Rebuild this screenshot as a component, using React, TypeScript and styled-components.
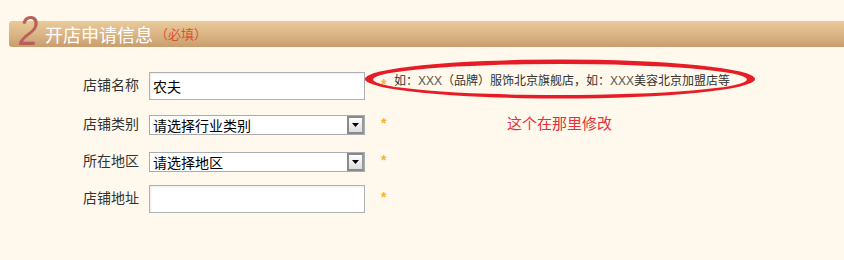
import React from "react";
import styled, { createGlobalStyle } from "styled-components";

const Global = createGlobalStyle`
  html, body {
    margin: 0;
    padding: 0;
    background: #fef9ec;
  }
  body {
    font-family: "Noto Sans CJK SC", "Noto Sans", sans-serif;
    color: #333;
  }
`;

const Page = styled.div`
  position: relative;
  width: 844px;
  height: 260px;
  padding-top: 21px;
  box-sizing: border-box;
  overflow: hidden;
`;

const Header = styled.div`
  margin-left: 9px;
  height: 26px;
  display: flex;
  align-items: flex-start;
  padding-left: 10px;
  border-radius: 3px 0 0 3px;
  background: linear-gradient(to bottom, #e9ca9b 0%, #dcb585 50%, #c89d6f 100%);
`;

const StepNumber = styled.span`
  display: inline-block;
  font-family: "Liberation Sans", Arial, sans-serif;
  font-style: italic;
  font-size: 43px;
  line-height: 26px;
  margin-top: -4px;
  color: #b6615a;
  width: 26px;
  transform: scaleX(0.8);
  transform-origin: left center;
`;

const Title = styled.span`
  font-size: 18px;
  line-height: 26px;
  color: #fff;
`;

const Required = styled.span`
  font-size: 13px;
  line-height: 26px;
  color: #d8532c;
  margin-left: 2px;
`;

const Form = styled.div`
  display: flex;
  flex-direction: column;
  padding-left: 83px;
`;

const Row = styled.div<{ $top: number; $height: number }>`
  display: flex;
  align-items: center;
  height: ${(p) => p.$height}px;
  margin-top: ${(p) => p.$top}px;
`;

const Label = styled.span`
  width: 66px;
  font-size: 14px;
  line-height: 20px;
  padding-bottom: 4px;
  color: #333;
`;

const TextInput = styled.div`
  width: 216px;
  height: 28px;
  box-sizing: border-box;
  border: 1px solid #aeb0b6;
  background: #fff;
  box-shadow: inset 1px 1px 2px rgba(0, 0, 0, 0.08);
  font-size: 14px;
  line-height: 26px;
  padding-left: 3px;
  color: #000;
`;

const Select = styled.div`
  width: 216px;
  height: 20px;
  box-sizing: border-box;
  border: 1px solid #a9abb0;
  background: #fff;
  display: flex;
  align-items: center;
  justify-content: space-between;
  font-size: 14px;
  color: #000;
  padding-left: 3px;
`;

const SelectText = styled.span`
  line-height: 18px;
`;

const ArrowButton = styled.span`
  width: 17px;
  height: 18px;
  box-sizing: border-box;
  border: 2px solid #8a8a8a;
  border-right-color: #9a9a9a;
  background: linear-gradient(to bottom, #ffffff, #dcdcdc);
  display: flex;
  align-items: center;
  justify-content: center;
`;

const Star = styled.span`
  margin-left: 16px;
  font-family: "Liberation Sans", Arial, sans-serif;
  font-size: 14px;
  font-weight: bold;
  line-height: 14px;
  padding-bottom: 5px;
  color: #f7b526;
  width: 7px;
`;

const Hint = styled.span`
  margin-left: 6px;
  font-size: 12px;
  line-height: 14px;
  padding-bottom: 11px;
  color: #333;
`;

const Latin = styled.span`
  font-family: "Liberation Sans", Arial, sans-serif;
  color: #555;
`;

const Note = styled.span`
  margin-left: 119px;
  font-size: 15px;
  line-height: 18px;
  padding-bottom: 5px;
  color: #e8303a;
`;

const Annotation = styled.svg`
  position: absolute;
  left: 363px;
  top: 58px;
  pointer-events: none;
`;

const Arrow = () => (
  <svg width="7" height="4" viewBox="0 0 7 4">
    <path d="M0 0 H7 L3.5 4 Z" fill="#000" />
  </svg>
);

export default function App() {
  return (
    <>
      <Global />
      <Page>
        <Header>
          <StepNumber>2</StepNumber>
          <Title>开店申请信息</Title>
          <Required>（必填）</Required>
        </Header>
        <Form>
          <Row $top={25} $height={28}>
            <Label>店铺名称</Label>
            <TextInput>农夫</TextInput>
            <Star>*</Star>
            <Hint>
              如：<Latin>XXX</Latin>（品牌）服饰北京旗舰店，如：<Latin>XXX</Latin>美容北京加盟店等
            </Hint>
          </Row>
          <Row $top={15} $height={20}>
            <Label>店铺类别</Label>
            <Select>
              <SelectText>请选择行业类别</SelectText>
              <ArrowButton>
                <Arrow />
              </ArrowButton>
            </Select>
            <Star>*</Star>
            <Note>这个在那里修改</Note>
          </Row>
          <Row $top={17} $height={20}>
            <Label>所在地区</Label>
            <Select>
              <SelectText>请选择地区</SelectText>
              <ArrowButton>
                <Arrow />
              </ArrowButton>
            </Select>
            <Star>*</Star>
          </Row>
          <Row $top={13} $height={28}>
            <Label>店铺地址</Label>
            <TextInput />
            <Star>*</Star>
          </Row>
        </Form>
        <Annotation width="396" height="44" viewBox="0 0 396 44">
          <path
            fillRule="evenodd"
            fill="#e81c26"
            d="M2 21 A195 19.5 0 1 0 392 21 A195 19.5 0 1 0 2 21 Z M10 21.5 A187 15.5 0 1 0 384 21.5 A187 15.5 0 1 0 10 21.5 Z"
          />
        </Annotation>
      </Page>
    </>
  );
}
